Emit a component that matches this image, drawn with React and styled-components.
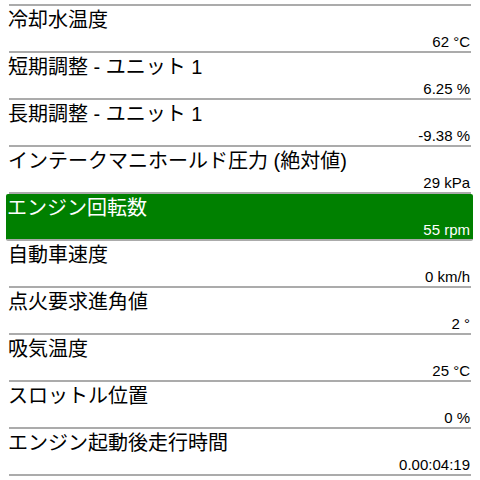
import React from "react";
import styled, { createGlobalStyle } from "styled-components";

const Global = createGlobalStyle`
  html, body { margin: 0; padding: 0; background: #fff; overflow: hidden; }
  body { font-family: "Liberation Sans", "Noto Sans CJK JP", sans-serif; }
`;

const List = styled.div`
  display: flex;
  flex-direction: column;
  margin-top: -41px;
  height: 521px;
  overflow: hidden;
`;

const Row = styled.div`
  flex: none;
  height: 45px;
  margin: 0 ${(p) => (p.$selected ? "7px 0 6px" : "9px 0 9px")};
  padding: 0 ${(p) => (p.$selected ? "3px 0 2px" : "1px 0 0")};
  border-bottom: 2px solid #ababab;
  background: ${(p) => (p.$selected ? "#008000" : "transparent")};
  color: ${(p) => (p.$selected ? "#fff" : "#000")};
  display: flex;
  flex-direction: column;
  justify-content: space-between;
  border-radius: ${(p) => (p.$selected ? "2px" : "0")};
`;

const Label = styled.div`
  font-family: "Liberation Sans", "Noto Sans CJK JP", sans-serif;
  font-size: 20px;
  line-height: 24px;
  padding-top: 2px;
  margin-left: -1px;
  white-space: nowrap;
`;

const Value = styled.div`
  font-family: "Liberation Sans", "Noto Sans CJK JP", sans-serif;
  font-size: 15px;
  line-height: 17px;
  text-align: right;
  padding-bottom: 1px;
  white-space: nowrap;
`;

const rows = [
  { label: "", value: "" },
  { label: "冷却水温度", value: "62 °C" },
  { label: "短期調整 - ユニット 1", value: "6.25 %" },
  { label: "長期調整 - ユニット 1", value: "-9.38 %" },
  { label: "インテークマニホールド圧力 (絶対値)", value: "29 kPa" },
  { label: "エンジン回転数", value: "55 rpm", selected: true },
  { label: "自動車速度", value: "0 km/h" },
  { label: "点火要求進角値", value: "2 °" },
  { label: "吸気温度", value: "25 °C" },
  { label: "スロットル位置", value: "0 %" },
  { label: "エンジン起動後走行時間", value: "0.00:04:19" },
];

export default function App() {
  return (
    <>
      <Global />
      <List>
        {rows.map((r, i) => (
          <Row key={i} $selected={r.selected}>
            <Label>{r.label}</Label>
            <Value>{r.value}</Value>
          </Row>
        ))}
      </List>
    </>
  );
}
